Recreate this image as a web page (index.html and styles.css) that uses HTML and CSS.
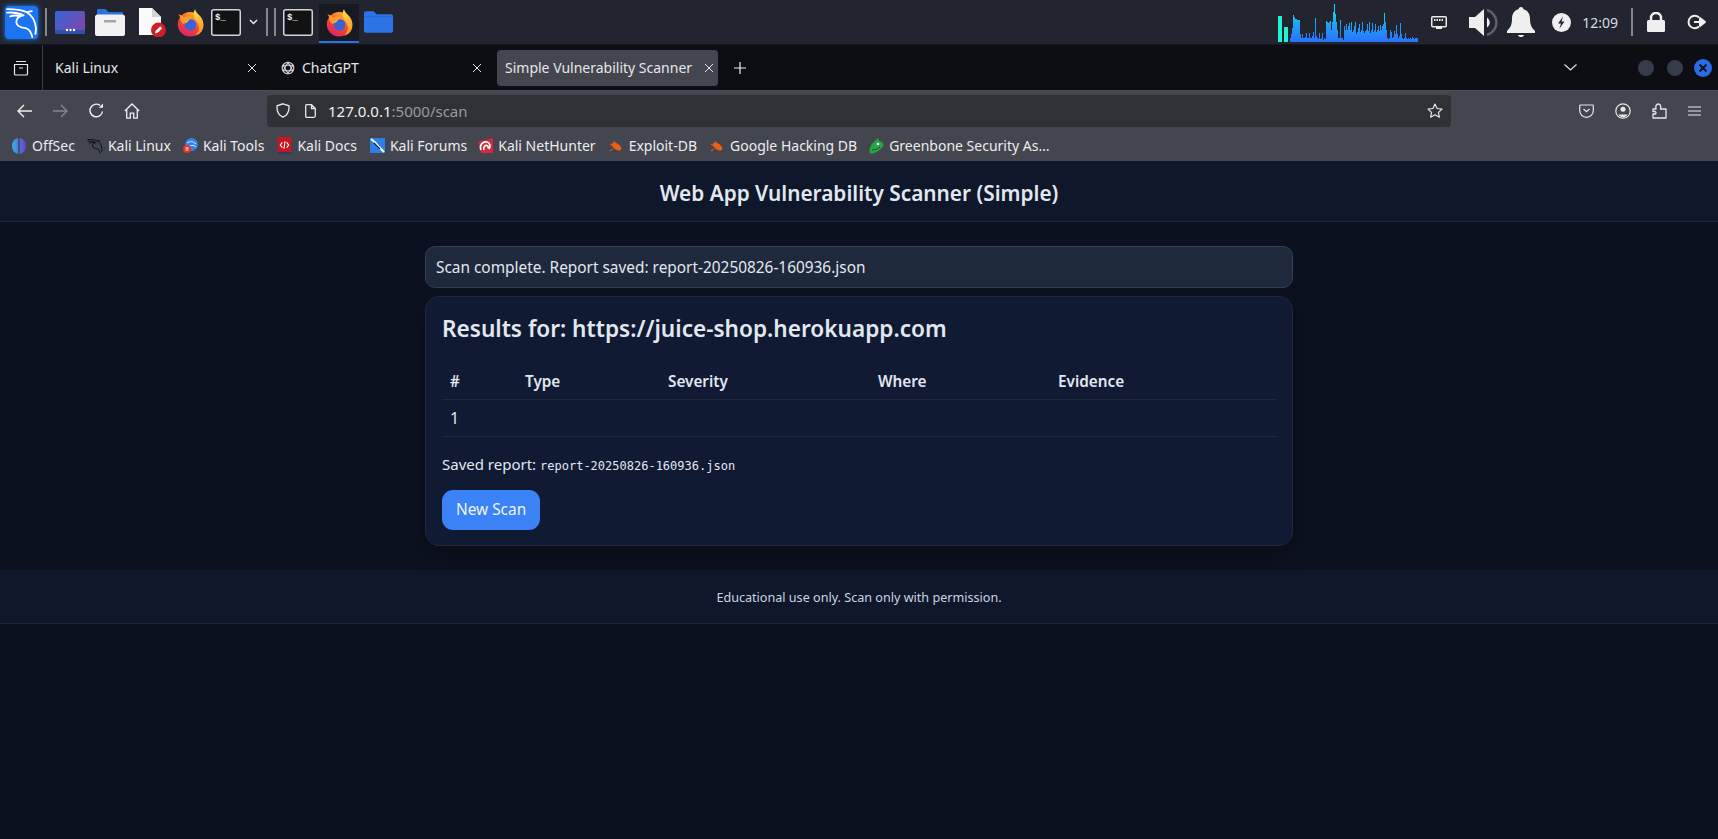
FILE: index.html
```html
<!DOCTYPE html>
<html lang="en">
<head>
    <meta charset="UTF-8">
    <meta name="viewport" content="width=device-width, initial-scale=1.0">
    <title>Simple Vulnerability Scanner</title>
    <link rel="stylesheet" href="styles.css">
</head>
<body>
    <svg class="defs" aria-hidden="true">
        <defs>
            <linearGradient id="graphFill" gradientUnits="userSpaceOnUse" x1="0" y1="4" x2="0" y2="42">
                <stop offset="0" stop-color="#1ee6e6"/>
                <stop offset="0.6" stop-color="#1f9cf5"/>
                <stop offset="1" stop-color="#2a72ff"/>
            </linearGradient>
            <linearGradient id="foxBody" x1="0.8" y1="0.1" x2="0.3" y2="1">
                <stop offset="0" stop-color="#ffb02e"/>
                <stop offset="0.5" stop-color="#f5452f"/>
                <stop offset="1" stop-color="#d9266b"/>
            </linearGradient>
            <linearGradient id="foxFlame" x1="0.4" y1="0" x2="0.6" y2="1">
                <stop offset="0" stop-color="#ffe14a"/>
                <stop offset="1" stop-color="#ff8a1f"/>
            </linearGradient>
            <linearGradient id="screenFill" x1="0" y1="0" x2="1" y2="0.6">
                <stop offset="0" stop-color="#3566d8"/>
                <stop offset="1" stop-color="#7a47ae"/>
            </linearGradient>
            <linearGradient id="offsecFill" x1="0" y1="0" x2="1" y2="0">
                <stop offset="0" stop-color="#2fb4e8"/>
                <stop offset="1" stop-color="#6a3fd0"/>
            </linearGradient>
            <symbol id="firefox" viewBox="0 0 32 32">
                <circle cx="15.5" cy="18" r="13.5" fill="url(#foxBody)"/>
                <path d="M21 1c.5 4 4 5.500 6.500 9 2.800 4 3.500 8.500 2.300 12.500-1.300 4.500-4.500 7-8.800 8 4.500-4 5.300-9 3.300-13.500C22.800 14 20 12 19.500 8.500 19.200 6 19.800 3 21 1z" fill="url(#foxFlame)"/>
                <path d="M2.500 7c2.500.5 4.500 1.500 6 3.500 2-1.500 5-1.800 7.500-1 3.500 1 6 3.500 7 6.500-2-2-4.500-3-7.500-3-3.500 0-6 2-6.500 5-2-1-3.500-2.500-4-4.500-.5-2 0-4.500-2.500-6.500z" fill="#ff9a26"/>
                <circle cx="16" cy="18.500" r="6.500" fill="#3f5fd6"/>
                <path d="M9.500 17c1-3.500 4-5 7-4.800-2 .8-3.500 2-4 3.500z" fill="#ffc23a"/>
            </symbol>
            <symbol id="terminal" viewBox="0 0 30 27">
                <rect x="0.750" y="0.750" width="28.500" height="25.500" rx="2" fill="#111214" stroke="#d4d4d4" stroke-width="1.500"/>
                <text x="4" y="11" class="term-prompt">$_</text>
            </symbol>
            <symbol id="dragon" viewBox="0 0 32 32">
                <path d="M2 3c7 0 14 .5 19 3 4.500 2.500 8 7 9 15 0 2.500 0 4.500-.5 6M18 9c-4 .5-7.500 3-7 7 .5 4 5 5 9 5.500 3 .5 5 3 6.500 8.500M2 6.500c4-.5 9 0 14 1.500M5 10c3-1 6-1 9-.5M21 6l5-1" fill="none" stroke-width="1.800" stroke-linecap="round"/>
            </symbol>
            <symbol id="bug" viewBox="0 0 14 14">
                <path d="M1 12l3-2M1 5l3 2M5 2l2 3" stroke="#e8641c" stroke-width="1" fill="none"/>
                <ellipse cx="7.500" cy="7.500" rx="5.500" ry="3" transform="rotate(35 7.500 7.500)" fill="#ea5f16"/>
            </symbol>
        </defs>
    </svg>

    <div class="panel">
        <div class="panel-left">
            <svg class="launcher" width="33" height="33" viewBox="0 0 32 32"><rect width="32" height="32" rx="3" fill="#1c74f2"/><use href="#dragon" width="32" height="32" stroke="#fff"/></svg>
            <span class="panel-sep sep-first"></span>
            <svg class="ic-screen" width="30" height="23" viewBox="0 0 30 23"><rect width="30" height="22" rx="1.500" fill="url(#screenFill)"/><rect y="19" width="30" height="4" rx="1" fill="#2f4fa8"/><circle cx="12" cy="19" r="1.200" fill="#fff"/><circle cx="15.500" cy="19" r="1.200" fill="#fff"/><circle cx="19" cy="19" r="1.200" fill="#fff"/></svg>
            <svg class="ic-files" width="30" height="28" viewBox="0 0 30 28"><path d="M2 6V2.500C2 1.500 2.600 1 3.500 1h7l3 3h13c1 0 1.500.5 1.500 1.500V8H2z" fill="#2a72e0"/><path d="M0 9c0-1.500 1-2.500 2.500-2.500h25C29 6.500 30 7.500 30 9v17c0 1-.8 2-2 2H2c-1.200 0-2-1-2-2z" fill="#f2f2f2"/><rect x="9" y="12" width="12" height="2.500" fill="#a5a5a5"/></svg>
            <svg class="ic-doc" width="27" height="30" viewBox="0 0 27 30"><path d="M0 1h13l9 9v18H0z" fill="#fbfbfb"/><path d="M13 1l9 9h-9z" fill="#d5d5d5"/><circle cx="19.500" cy="23" r="7.500" fill="#d21d24"/><path d="M16 26.500l.7-2.700 4.500-4.500 2 2-4.500 4.500z" fill="#fff"/></svg>
            <svg class="ic-fox" width="29" height="29"><use href="#firefox"/></svg>
            <svg class="ic-term" width="30" height="27"><use href="#terminal"/></svg>
            <svg class="ic-caret" width="9" height="6" viewBox="0 0 9 6"><path d="M1 1l3.500 3.500L8 1" fill="none" stroke="#ececec" stroke-width="1.500"/></svg>
            <span class="panel-sep sep-a"></span>
            <span class="panel-sep sep-b"></span>
            <svg class="ic-term2" width="30" height="27"><use href="#terminal"/></svg>
            <div class="running"><svg width="29" height="29"><use href="#firefox"/></svg></div>
            <svg class="ic-folder" width="29" height="22" viewBox="0 0 30 22"><path d="M0 2c0-1 .7-2 2-2h8l3 3h15c1.200 0 2 .8 2 2v15c0 1.200-.8 2-2 2H2c-1.200 0-2-.8-2-2z" fill="#2c74e8"/><path d="M0 5h30v1H0z" fill="#2566cc"/></svg>
        </div>
        <div class="panel-right">
            <svg class="graph" width="140" height="44" viewBox="0 0 140 44">
                <rect x="0" y="16" width="4" height="26" fill="#1df5d6"/>
                <rect x="6" y="27" width="4" height="15" fill="#1df5d6"/>
                <path fill="url(#graphFill)" d="M12 42V38h1V34h1V28h1V15h1V17h1V19h2V20h3V34h1V38h1V34h1V38h2V37h1V33h1V38h2V33h1V38h2V36h1V32h1V38h1V18h1V36h1V38h1V39h1V33h1V39h1V38h1V33h1V40h1V38h1V39h1V21h1V22h1V23h1V22h1V21h1V30h1V22h1V12h1V4h1V14h1V22h1V30h1V38h2V20h1V38h2V40h1V26h1V30h1V24h1V30h1V26h1V23h1V30h1V22h1V32h1V30h1V26h1V22h1V34h1V32h1V28h1V24h1V32h1V30h1V22h1V31h1V33h1V31h1V30h1V24h1V31h1V22h1V33h1V30h1V23h1V32h1V30h1V24h1V32h1V30h1V26h1V31h1V25h1V30h1V26h1V24h1V13h1V22h1V30h1V38h1V39h1V38h1V30h1V32h1V38h1V37h1V31h1V34h1V25h1V34h1V38h1V36h1V23h1V34h1V38h1V39h1V38h1V33h1V38h1V39h1V38h1V39h1V38h1V39h1V37h1V38h1V39h1V38h3V22h1V42z"/>
            </svg>
            <svg class="ic-net" width="16" height="13" viewBox="0 0 16 13"><rect x="0.750" y="0.750" width="14.500" height="10" rx="1" fill="none" stroke="#ececec" stroke-width="1.500"/><path d="M3 4h10" stroke="#ececec" stroke-width="2" stroke-dasharray="1.500 1"/><path d="M5 11h6v2H5z" fill="#ececec"/></svg>
            <svg class="ic-vol" width="29" height="29" viewBox="0 0 29 29"><path d="M0 9h6l9-8v27l-9-8H0z" fill="#efefef"/><path d="M18 9.500a6 6 0 0 1 0 10z" fill="#efefef"/><path d="M18 2a13 13 0 0 1 0 25" fill="none" stroke="#5f6166" stroke-width="2.500"/></svg>
            <svg class="ic-bell" width="28" height="31" viewBox="0 0 28 31"><path d="M14 0c1.500 0 2.500 1 2.500 2.300C21 3.500 23 7 23 12c0 6 2 9 5 12v2H0v-2c3-3 5-6 5-12 0-5 2-8.500 6.500-9.700C11.500 1 12.500 0 14 0z" fill="#efefef"/><path d="M11 28h6c-.5 1.500-1.500 2-3 2s-2.500-.5-3-2z" fill="#efefef"/></svg>
            <svg class="ic-bolt" width="19" height="19" viewBox="0 0 19 19"><circle cx="9.500" cy="9.500" r="9.500" fill="#efefef"/><path d="M11 3.500L6 10.500h3l-1.500 5 5-7h-3z" fill="#23262f"/></svg>
            <span class="clock">12:09</span>
            <span class="panel-sep sep-clock"></span>
            <svg class="ic-lock" width="18" height="20" viewBox="0 0 18 20"><path d="M4 9V6a5 5 0 0 1 10 0v3" fill="none" stroke="#efefef" stroke-width="2.500"/><rect y="8" width="18" height="12" rx="1.500" fill="#efefef"/></svg>
            <svg class="ic-exit" width="20" height="16" viewBox="0 0 20 16"><path d="M12 3.500A6.200 6.200 0 1 0 12 12.500" fill="none" stroke="#efefef" stroke-width="2"/><path d="M7 8h9M13 4l5 4-5 4z" fill="#efefef" stroke="#efefef" stroke-width="2" stroke-linejoin="round"/></svg>
        </div>
    </div>

    <div class="tabbar">
        <div class="tab-archive">
            <svg width="16" height="16" viewBox="0 0 16 16" fill="none" stroke="#e8e8e8" stroke-width="1.200"><path d="M3 1.500h10M1.500 4.500h13v9.500a1 1 0 0 1-1 1h-11a1 1 0 0 1-1-1zM6 8h4"/></svg>
        </div>
        <div class="tab tab-kali">
            <span class="tab-title">Kali Linux</span>
            <svg class="tab-x" width="10" height="10" viewBox="0 0 10 10"><path d="M1 1l8 8M9 1l-8 8" stroke="#e4e4e4" stroke-width="1"/></svg>
        </div>
        <div class="tab tab-gpt">
            <svg class="tab-icon" width="14" height="14" viewBox="0 0 14 14" fill="none" stroke="#d8d8d8" stroke-width="1.100"><circle cx="7" cy="7" r="5.800"/><path d="M7 1.500l4.800 8.200H2.200zM7 12.500L2.200 4.300h9.600z"/></svg>
            <span class="tab-title">ChatGPT</span>
            <svg class="tab-x" width="10" height="10" viewBox="0 0 10 10"><path d="M1 1l8 8M9 1l-8 8" stroke="#e4e4e4" stroke-width="1"/></svg>
        </div>
        <div class="tab tab-active">
            <span class="tab-title">Simple Vulnerability Scanner</span>
            <svg class="tab-x" width="10" height="10" viewBox="0 0 10 10"><path d="M1 1l8 8M9 1l-8 8" stroke="#e4e4e4" stroke-width="1"/></svg>
        </div>
        <svg class="tab-plus" width="12" height="12" viewBox="0 0 12 12"><path d="M6 0v12M0 6h12" stroke="#f0f0f0" stroke-width="1.200"/></svg>
        <div class="tab-end">
            <svg class="tab-list" width="13" height="7" viewBox="0 0 13 7"><path d="M.5.500l6 5.500 6-5.500" fill="none" stroke="#e4e4e4" stroke-width="1.100"/></svg>
            <span class="win-btn"></span>
            <span class="win-btn"></span>
            <span class="win-btn win-close">
                <svg width="8" height="8" viewBox="0 0 8 8"><path d="M.5.500l7 7M7.500.500l-7 7" stroke="#10151f" stroke-width="2"/></svg>
            </span>
        </div>
    </div>

    <div class="navbar">
        <svg class="nav-back" width="16" height="14" viewBox="0 0 16 14" fill="none" stroke="#f0f0f0" stroke-width="1.400"><path d="M15 7H1.500M7 1L1 7l6 6"/></svg>
        <svg class="nav-fwd" width="16" height="14" viewBox="0 0 16 14" fill="none" stroke="#85878d" stroke-width="1.400"><path d="M1 7h13.500M9 1l6 6-6 6"/></svg>
        <svg class="nav-reload" width="15" height="15" viewBox="0 0 15 15" fill="none" stroke="#f0f0f0" stroke-width="1.400"><path d="M13.500 8.500A6.300 6.300 0 1 1 11 2.400"/><path d="M14 .5v4.200H9.800z" fill="#f0f0f0" stroke="none"/></svg>
        <svg class="nav-home" width="16" height="16" viewBox="0 0 16 16" fill="none" stroke="#f0f0f0" stroke-width="1.300"><path d="M.8 8L8 1l7.200 7M2.700 6.500v8.700h3.600v-5h3.400v5h3.600V6.500"/></svg>
        <div class="urlbar">
            <svg class="url-shield" width="14" height="15" viewBox="0 0 14 15" fill="none" stroke="#e8e8e8" stroke-width="1.300"><path d="M7 .8l6 2c.3 5.500-1.500 9.500-6 11.400C2.500 12.300.7 8.300 1 2.800z"/></svg>
            <svg class="url-page" width="11" height="14" viewBox="0 0 11 14" fill="none" stroke="#e8e8e8" stroke-width="1.300"><path d="M1.500.700h5l3.800 3.800v7.300a1.500 1.500 0 0 1-1.500 1.500H1.500A1 1 0 0 1 .7 12V1.500A1 1 0 0 1 1.500.700zM6.500.700v3.800h3.800"/></svg>
            <span class="url-text">127.0.0.1<span class="url-dim">:5000/scan</span></span>
            <svg class="url-star" width="16" height="15" viewBox="0 0 16 15" fill="none" stroke="#e8e8e8" stroke-width="1.200"><path d="M8 1l2.100 4.500 4.900.6-3.600 3.300 1 4.800L8 11.800l-4.400 2.400 1-4.800L1 6.100l4.900-.6z" stroke-linejoin="round"/></svg>
        </div>
        <div class="nav-tools">
            <svg width="15" height="14" viewBox="0 0 15 14" fill="none" stroke="#e8e8e8" stroke-width="1.200"><path d="M1.500 1h12c.4 0 .8.400.8.800v4.700a6.800 6.800 0 0 1-13.600 0V1.800c0-.4.400-.8.800-.8zM4.500 5l3 2.700 3-2.700"/></svg>
            <svg width="16" height="16" viewBox="0 0 16 16" fill="none" stroke="#e8e8e8" stroke-width="1.200"><circle cx="8" cy="8" r="7.200"/><circle cx="8" cy="6.200" r="2.500" fill="#e8e8e8" stroke="none"/><path d="M3.500 11.500h9c-1 1.800-2.500 2.800-4.500 2.800s-3.500-1-4.500-2.800z" fill="#e8e8e8" stroke="none"/></svg>
            <svg width="15" height="16" viewBox="0 0 15 16" fill="none" stroke="#e8e8e8" stroke-width="1.300"><path d="M1 6h3c-.8-3 .5-5 2.300-5S9.500 3 8.500 6h5.500v9H1v-4h2.500c1-1 .5-2.500-1-2.500H1z" stroke-linejoin="round"/></svg>
            <svg width="13" height="10" viewBox="0 0 13 10" stroke="#e8e8e8" stroke-width="1.200"><path d="M0 1h13M0 5h13M0 9h13"/></svg>
        </div>
    </div>

    <div class="bookmarks">
        <a class="bm bm-offsec"><svg width="14" height="16" viewBox="0 0 14 16"><ellipse cx="7" cy="8" rx="7" ry="8" fill="url(#offsecFill)"/><path d="M7 0v16" stroke="#43464f" stroke-width="1.500"/></svg>OffSec</a>
        <a class="bm"><svg width="16" height="16" stroke="#0c0c0c"><use href="#dragon" width="16" height="16"/></svg>Kali Linux</a>
        <a class="bm"><svg width="15" height="15" viewBox="0 0 15 15"><circle cx="8.500" cy="6.500" r="6.500" fill="#2f86e6"/><path d="M4 5c3-2 6-2 9 1M7 8c2-1 4-1 6 1" stroke="#d6ecff" fill="none"/><circle cx="4" cy="11" r="4" fill="#e5352b"/><path d="M2.500 9.800h3M3.200 9.800v3M4.800 9.800v3" stroke="#fff" stroke-width=".7"/></svg>Kali Tools</a>
        <a class="bm bm-docs"><svg width="15" height="17" viewBox="0 0 13 16"><rect width="13" height="16" rx="1" fill="#c8161d"/><rect y="14" width="13" height="2" fill="#2b3a67"/><path d="M4.500 5L2.500 7.500 4.500 10M8.500 5l2 2.500-2 2.500M7 4L6 11" stroke="#fff" stroke-width="1" fill="none"/></svg>Kali Docs</a>
        <a class="bm bm-forums"><svg width="15" height="15" viewBox="0 0 15 15"><rect width="15" height="15" fill="#2a7fe8"/><path d="M1 1c3 2 6 5 8 8l5 5" stroke="#fff" stroke-width="2" fill="none"/><path d="M4 5l6 6" stroke="#11243f" stroke-width="1.200"/></svg>Kali Forums</a>
        <a class="bm bm-hunter"><svg width="15" height="15" viewBox="0 0 15 15"><path d="M0 4L15 0v15H3z" fill="#d7263d"/><path d="M3 12C1 7 5 3 9 4c3 .800 4 4 2 7M6 12c-1-3 1-5 3-4.500 1 .3 1.500 1.500 1 3" fill="none" stroke="#fff" stroke-width="1.700"/></svg>Kali NetHunter</a>
        <a class="bm bm-bug"><svg width="14" height="14"><use href="#bug"/></svg>Exploit-DB</a>
        <a class="bm bm-bug"><svg width="14" height="14"><use href="#bug"/></svg>Google Hacking DB</a>
        <a class="bm"><svg width="15" height="16" viewBox="0 0 15 16"><path d="M9 0l1 3c3 .500 5 2.500 4.500 5-1 1-3 3.500-5.500 5-2.500 1.800-5 3-8 2.500C-.500 11 2 6 5 4z" fill="#26a448"/><circle cx="9" cy="6" r="1.300" fill="#dff5e3"/><path d="M3 12c3 0 6-1 8-3" stroke="#0c5a25" fill="none"/></svg>Greenbone Security As&hellip;</a>
    </div>

    <div class="site">
        <header class="site-head">Web App Vulnerability Scanner (Simple)</header>
        <main class="site-main">
            <div class="flash">Scan complete. Report saved: report-20250826-160936.json</div>
            <section class="card">
                <h2>Results for: https://juice-shop.herokuapp.com</h2>
                <table class="results">
                    <thead>
                        <tr>
                            <th>#</th>
                            <th>Type</th>
                            <th>Severity</th>
                            <th>Where</th>
                            <th>Evidence</th>
                        </tr>
                    </thead>
                    <tbody>
                        <tr>
                            <td>1</td>
                            <td></td>
                            <td></td>
                            <td></td>
                            <td></td>
                        </tr>
                    </tbody>
                </table>
                <p class="saved">Saved report: <code>report-20250826-160936.json</code></p>
                <a class="btn">New Scan</a>
            </section>
        </main>
        <footer class="site-foot">Educational use only. Scan only with permission.</footer>
    </div>
</body>
</html>
```

FILE: styles.css
```css
* {
    box-sizing: border-box;
}

html, body {
    height: 100%;
}

body {
    margin: 0;
    display: flex;
    flex-direction: column;
    overflow: hidden;
    font-family: "Noto Sans", sans-serif;
    background-color: #0b111e;
    color: #e2e8f0;
}

svg {
    display: block;
    flex: none;
}

.defs {
    position: absolute;
    width: 0;
    height: 0;
}

.term-prompt {
    font-family: "Liberation Mono", monospace;
    font-size: 9px;
    font-weight: 700;
    fill: #f0f0f0;
}

/* desktop panel */
.panel {
    display: flex;
    justify-content: space-between;
    height: 44px;
    background-color: #22252f;
    flex: none;
}

.panel-left, .panel-right {
    display: flex;
    align-items: center;
    height: 100%;
}

.panel-sep {
    display: block;
    width: 2px;
    height: 28px;
    background-color: #85878b;
}

.launcher {
    margin-left: 5px;
    border-radius: 3px;
    box-shadow: 0 0 5px #1c74f2;
}

.sep-first { margin-left: 7px; }
.ic-screen { margin-left: 8px; }
.ic-files { margin-left: 10px; }
.ic-doc { margin-left: 14px; }
.ic-fox { margin-left: 10px; }
.ic-term { margin-left: 6px; }
.ic-caret { margin-left: 8px; }
.sep-a { margin-left: 8px; }
.sep-b { margin-left: 6px; }
.ic-term2 { margin-left: 7px; }

.running {
    display: flex;
    align-items: center;
    justify-content: center;
    width: 40px;
    height: 39px;
    margin: 2px 0 0 6px;
    background-color: #181a22;
    border-bottom: 2px solid #2a72e8;
}

.ic-folder { margin-left: 5px; }

.graph { margin-right: 13px; }
.ic-vol { margin-left: 22px; }
.ic-bell { margin-left: 9px; }
.ic-bolt { margin-left: 17px; }

.clock {
    margin-left: 11px;
    font-size: 14px;
    color: #d5dde4;
}

.sep-clock { margin-left: 13px; }
.ic-lock { margin-left: 14px; }
.ic-exit { margin: 0 11px 0 22px; }

/* browser tabs */
.tabbar {
    display: flex;
    align-items: center;
    height: 46px;
    background-color: #0c0e13;
    border-top: 1px solid #14161c;
    flex: none;
}

.tab-archive {
    display: flex;
    align-items: center;
    justify-content: center;
    width: 43px;
    height: 100%;
    border-right: 1px solid #3a3c42;
}

.tab {
    display: flex;
    align-items: center;
    height: 36px;
    font-size: 14px;
    color: #e6e6e8;
}

.tab-title {
    flex: 1;
    white-space: nowrap;
}

.tab-kali {
    width: 227px;
    padding: 0 13px 0 12px;
}

.tab-gpt {
    width: 227px;
    padding: 0 15px 0 11px;
}

.tab-icon {
    margin-right: 7px;
}

.tab-active {
    width: 221px;
    padding: 0 4px 0 8px;
    background-color: #43464f;
    border-radius: 4px;
}

.tab-plus {
    margin-left: 16px;
}

.tab-end {
    display: flex;
    align-items: center;
    margin-left: auto;
    padding-right: 6px;
}

.tab-list {
    margin-right: 48px;
}

.win-btn {
    display: flex;
    align-items: center;
    justify-content: center;
    width: 16px;
    height: 16px;
    margin-left: 13px;
    border-radius: 50%;
    background-color: #363c4c;
}

.win-close {
    width: 18px;
    height: 18px;
    margin-left: 11px;
    background-color: #2a6be8;
}

/* browser toolbar */
.navbar {
    display: flex;
    align-items: center;
    height: 40px;
    background-color: #43464f;
    border-top: 1px solid #4b4e57;
    flex: none;
}

.nav-back { margin-left: 17px; }
.nav-fwd { margin-left: 19px; }
.nav-reload { margin-left: 21px; }
.nav-home { margin-left: 20px; }

.urlbar {
    display: flex;
    align-items: center;
    width: 1184px;
    height: 32px;
    margin-left: 127px;
    padding: 0 8px 0 9px;
    background-color: #303136;
    border-radius: 4px;
}

.url-page { margin-left: 15px; }

.url-text {
    flex: 1;
    margin-left: 12px;
    font-size: 15px;
    color: #f0f0f0;
}

.url-dim {
    color: #9a9a9e;
}

.nav-tools {
    display: flex;
    align-items: center;
    gap: 21px;
    margin-left: 128px;
}

/* bookmarks */
.bookmarks {
    display: flex;
    align-items: center;
    gap: 12px;
    height: 31px;
    padding-left: 12px;
    background-color: #43464f;
    font-size: 14px;
    color: #ececee;
    flex: none;
}

.bm {
    display: flex;
    align-items: center;
    gap: 5px;
    white-space: nowrap;
}

.bm-offsec { gap: 6px; }
.bm-docs { margin-left: 1px; }
.bm-forums { margin-left: 1px; }
.bm-hunter { margin-left: -1px; }
.bm-bug { margin-left: 1px; gap: 6px; }

/* scanner page */
.site {
    flex: 1;
    background-color: #0b111e;
}

.site-head {
    height: 61px;
    padding-top: 18px;
    text-align: center;
    font-size: 20.8px;
    font-weight: 600;
    line-height: 28px;
    color: #e2e8f0;
    background-color: #0f172a;
    border-bottom: 1px solid #1e293b;
}

.site-main {
    width: 868px;
    margin: 0 auto;
    padding-top: 24px;
}

.flash {
    height: 42px;
    padding: 0 10px;
    font-size: 15.4px;
    line-height: 42px;
    color: #e2e8f0;
    background-color: #1e293b;
    border: 1px solid #334155;
    border-radius: 10px;
}

.card {
    height: 250px;
    margin-top: 8px;
    padding: 16px;
    background-color: #111a33;
    border: 1px solid #1e293b;
    border-radius: 14px;
    box-shadow: 0 8px 24px rgba(0, 0, 0, 0.25);
}

.card h2 {
    margin: 0;
    font-size: 22.6px;
    font-weight: 600;
    line-height: 32px;
    color: #e2e8f0;
}

.results {
    width: 100%;
    margin-top: 17px;
    border-collapse: collapse;
    table-layout: fixed;
}

.results th, .results td {
    padding: 0 8px;
    text-align: left;
    border-bottom: 1px solid #1e293b;
}

.results th {
    height: 37px;
    padding-top: 2px;
    font-size: 15.3px;
    font-weight: 600;
}

.results td {
    height: 37px;
    font-size: 16px;
}

.results th:nth-child(1) { width: 75px; }
.results th:nth-child(2) { width: 143px; }
.results th:nth-child(3) { width: 210px; }
.results th:nth-child(4) { width: 180px; }

.saved {
    margin: 17px 0 0;
    font-size: 15px;
    line-height: 20px;
}

.saved code {
    font-family: "DejaVu Sans Mono", monospace;
    font-size: 12px;
}

.btn {
    display: inline-block;
    height: 40px;
    margin-top: 14px;
    padding: 0 14px;
    font-size: 15.4px;
    line-height: 40px;
    color: #f1f5f9;
    background-color: #3b82f6;
    border-radius: 11px;
}

.site-foot {
    height: 54px;
    margin-top: 24px;
    text-align: center;
    font-size: 12.6px;
    line-height: 56px;
    color: #cbd5e1;
    background-color: #0f172a;
    border-bottom: 1px solid #1e293b;
}
```
